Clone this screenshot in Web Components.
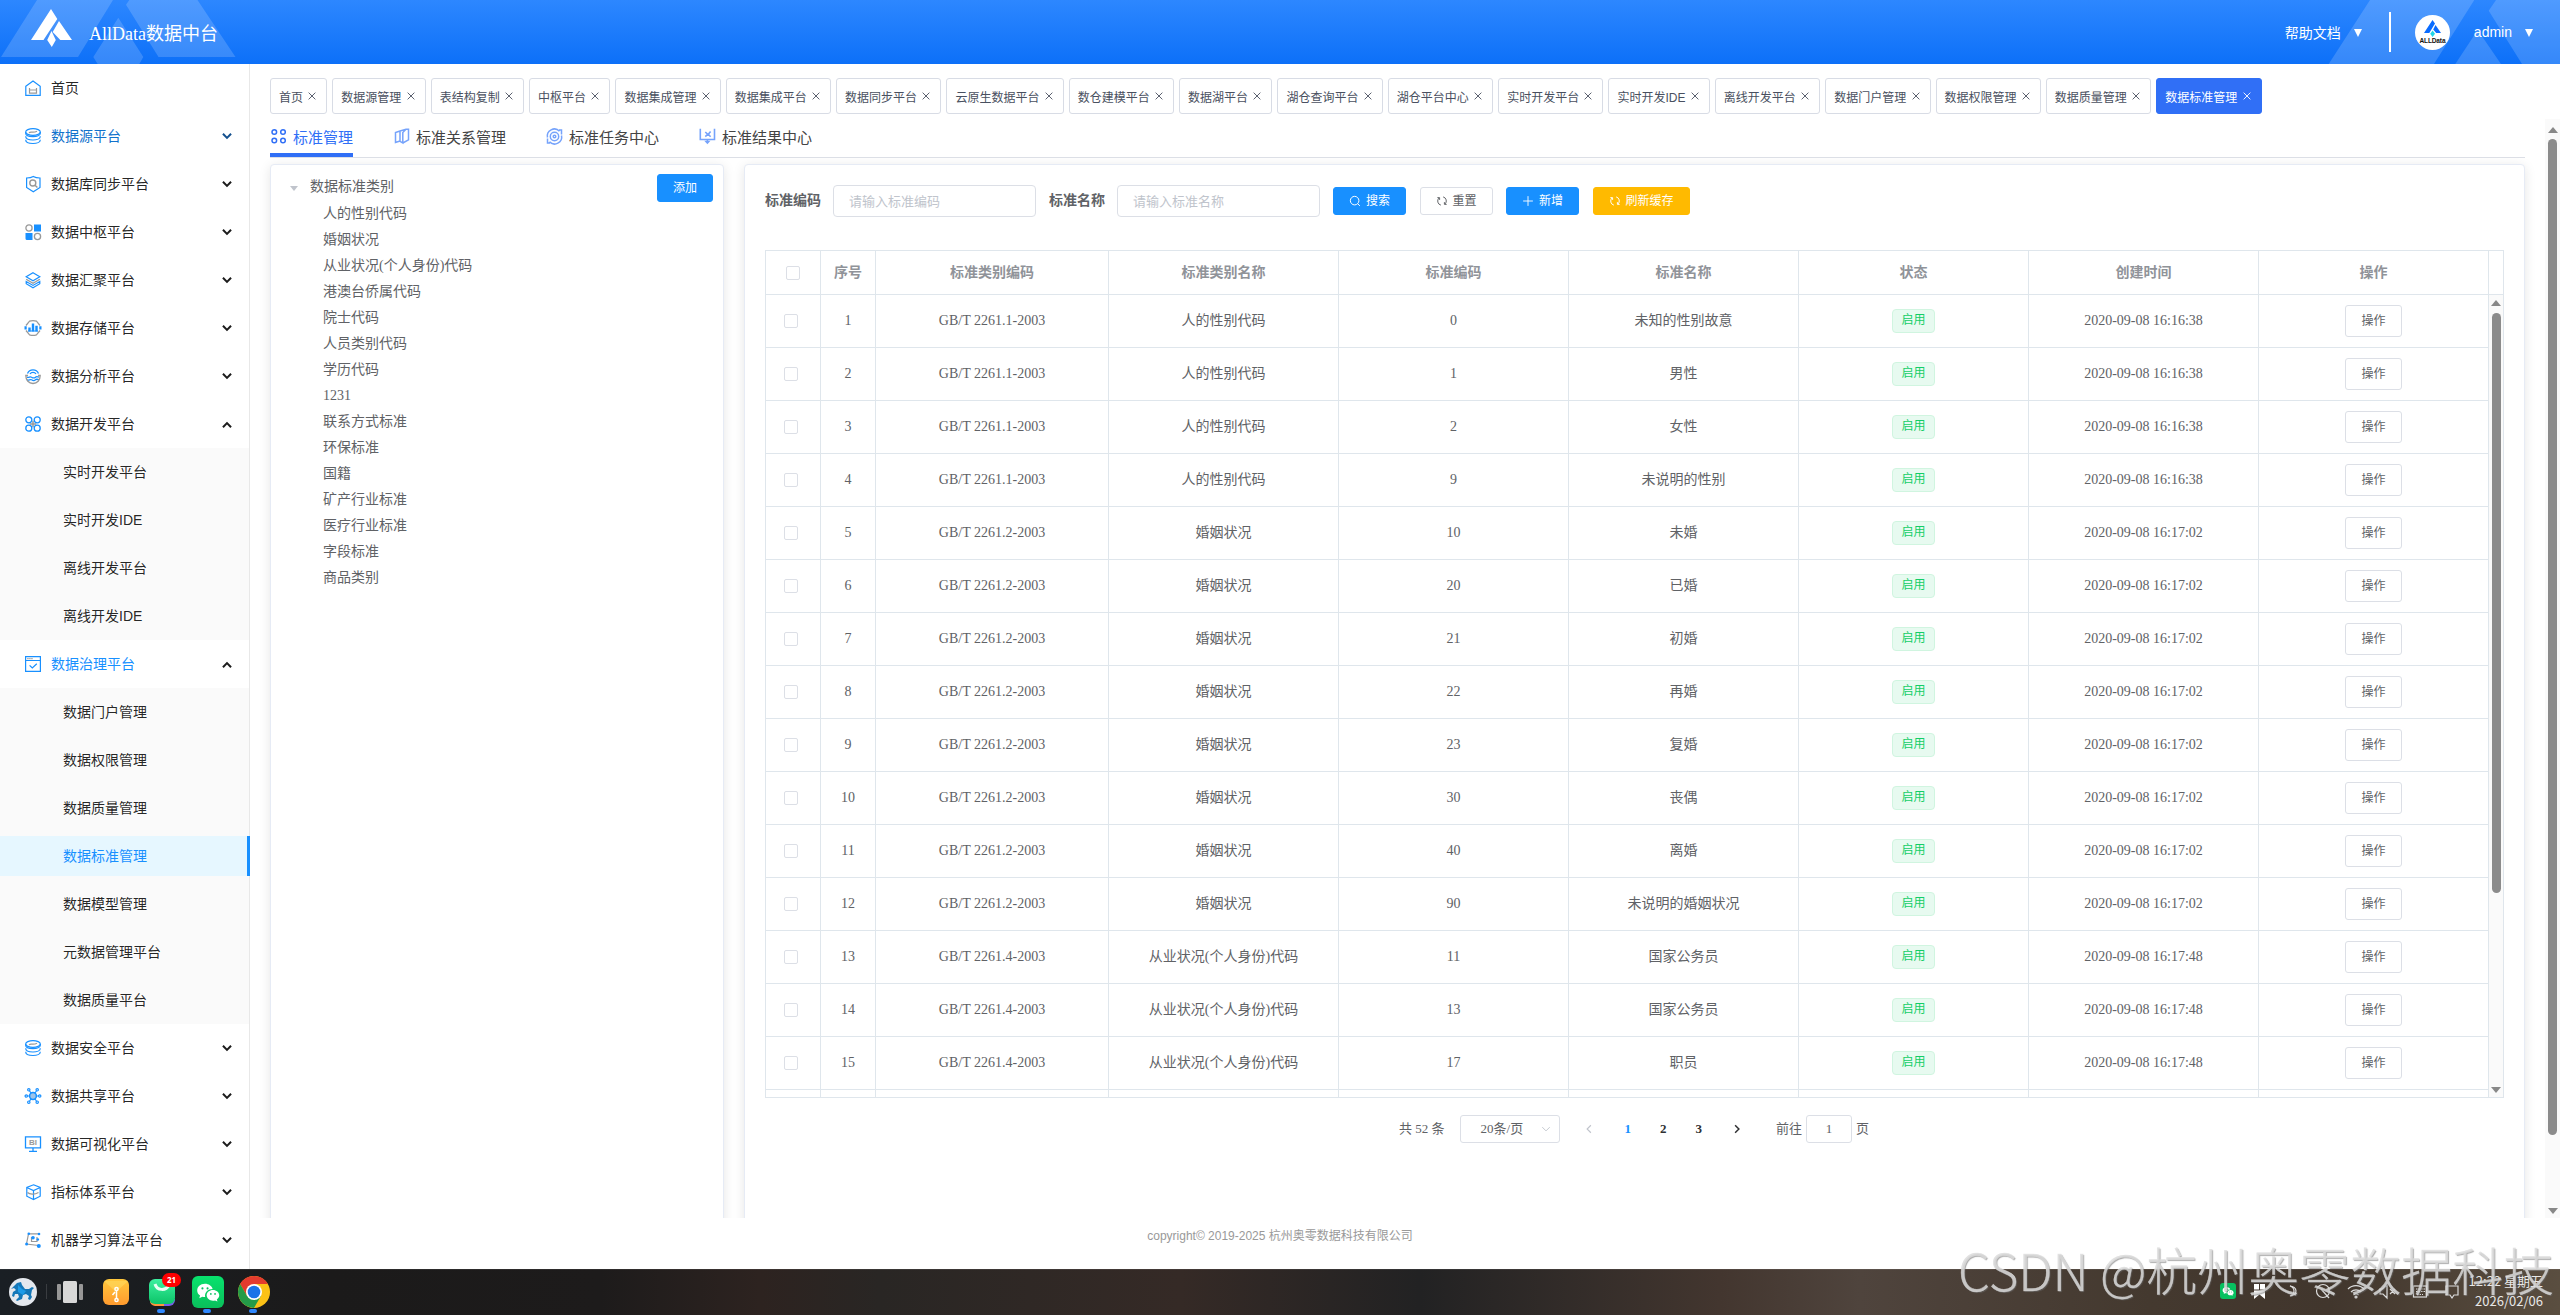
<!DOCTYPE html>
<html lang="zh-CN">

<head>
    <meta charset="utf-8" />
    <title>AllData数据中台</title>
    <style>
        html,
        body {
            margin: 0;
            padding: 0;
            height: 100%;
            overflow: hidden;
            background: #fff;
        }

        body {
            font-family: "Liberation Sans", "Noto Sans CJK SC", sans-serif;
            font-size: 14px;
        }
    </style>
</head>

<body>
    <all-data-app></all-data-app>
    <script>
        const BLUE = '#1890ff'
        const GRAY = '#999'

        // 图标库
        const ICONS = {
            home: `<g fill="none" stroke="${BLUE}"><path d="M.8 6.2 8 .9l7.200 5.300V15.300H.8z"/><path stroke="${GRAY}" d="M4.500 8v5.200h7V8M4.500 10h7"/></g>`,
            db: `<g fill="none" stroke="${BLUE}"><ellipse cx="8" cy="4" rx="7.300" ry="3.300"/><path d="M.7 4v1.300C.7 7.500 4 8.600 8 8.600s7.300-1.100 7.300-3.300V4M.7 8.200C.7 10.800 4 12 8 12s7.300-1.200 7.300-3.800M.7 11.700c0 2.600 3.300 3.800 7.300 3.800s7.300-1.200 7.300-3.800"/><path stroke="${GRAY}" d="M4 4.800c2-2 3.500.8 8-1.600"/></g>`,
            shield: `<g fill="none" stroke="${BLUE}"><path d="M8.300.5c2 1.200 4.300 1.500 6.700 1.500v9.500l-6.700 4.300-6.700-4.300V2C4 2 6.300 1.700 8.300.5z"/><g stroke="${GRAY}" stroke-width="1.400"><circle cx="7.800" cy="7" r="3"/><path d="m10 9.200 2.400 2.300"/></g></g>`,
            grid: `<g><path fill="${BLUE}" d="M9 .5h7v7H9zM.5 9h7v7H2a1.500 1.500 0 0 1-1.500-1.500z"/><g fill="none" stroke="${GRAY}" stroke-width="1.300"><circle cx="4" cy="4" r="3.100"/><circle cx="12.500" cy="12.500" r="3.100"/></g></g>`,
            layers: `<g fill="none" stroke="${BLUE}"><path d="m8 .8 6.800 4L8 8.800l-6.800-4z"/><path stroke="${GRAY}" stroke-width="1.300" d="m1.200 7.200 6.800 4 6.800-4"/><path d="M1.200 9.500v2.200l6.800 4 6.800-4V9.500L8 13.400z"/></g>`,
            storage: `<g fill="none" stroke="${GRAY}" stroke-width="1.300"><path d="M1 5.500 4.500 1.200A10 10 0 0 1 11.500 1.200L15 5.500M1 10.500l3.500 4.300a10 10 0 0 0 7 0l3.500-4.300"/><path stroke="${BLUE}" stroke-width="2.400" d="M4.500 11.500v-4M8 11.500V3.500M11.500 11.500V5.800"/></g><path fill="${BLUE}" d="M-.5 6.300h2.200v3.200H-.5zM14.300 6.300h2.200v3.200h-2.200zM3 10.500h10v1H3z"/>`,
            analysis: `<g fill="none" stroke="${BLUE}" stroke-width="1.300"><path d="M2.500 5.500a6 6 0 0 1 11 0M5 6a3.500 3.500 0 0 1 6 0M2 9.200c2 1 2.800-1 4.500 0s3 1 4 0 2-.7 3.500 0M2 11.800c2 1 2.800-1 4.500 0s3 1 4 0 2-.7 3.500 0"/><path stroke="${GRAY}" d="M3 7.500H.8c0 4.700 3 8 7.200 8s7.200-3.300 7.200-8H13"/></g>`,
            dev: `<path stroke="${GRAY}" stroke-width="1.500" d="M8 4.800v6.400M4.800 8h6.400"/><g fill="none" stroke="${BLUE}" stroke-width="1.300"><circle cx="3.800" cy="3.800" r="3"/><circle cx="12.200" cy="3.800" r="3"/><circle cx="3.800" cy="12.200" r="3"/><circle cx="12.200" cy="12.200" r="3"/></g>`,
            govern: `<g fill="none" stroke="${BLUE}" stroke-width="1.200"><path d="M.6.600h14.800v14.800H.6zM.6 4.500h14.800M4.600 9.300 7.300 12l4.500-4.300"/><path stroke="${GRAY}" d="M2.300 2.600h5.400" stroke-dasharray="1.300 .7"/></g>`,
            share: `<g fill="none" stroke="${BLUE}" stroke-width="1.200"><circle cx="8" cy="8" r="3.400" fill="#9fc4e8" stroke-width="1.500"/><circle cx="3.800" cy="1.800" r="1.200"/><circle cx="12.200" cy="1.800" r="1.200"/><circle cx="1.300" cy="8" r="1.200"/><circle cx="14.700" cy="8" r="1.200"/><circle cx="3.800" cy="14.200" r="1.200"/><circle cx="12.200" cy="14.200" r="1.200"/><path d="m4.500 3 1.700 2.200M11.500 3 9.800 5.200M2.500 8h2M11.500 8h2M4.500 13l1.700-2.200M11.500 13l-1.700-2.200"/></g>`,
            bi: `<g fill="none" stroke="${BLUE}" stroke-width="1.300"><path d="M.5.800h15v11H.5zM8 12v3M4 15.300h8"/></g><text x="8" y="9.200" text-anchor="middle" fill="${GRAY}" font-size="8" font-weight="bold" font-family="Liberation Sans, sans-serif">BI</text>`,
            cube: `<g fill="none" stroke="${BLUE}"><path d="m8.500.8 6.700 2.700v8.700l-6.700 3.300-6.700-3.300V3.500zM1.800 3.500l6.700 3 6.700-3M8.500 6.500v9"/><path stroke="${GRAY}" stroke-width="1.300" d="M2.500 8.500c2 2 7 2.500 11 0"/></g>`,
            ml: `<g fill="none" stroke="${GRAY}" stroke-width="1.200"><path d="M3.500 1.800h10.700M3.500 1.800 1.500 12l12 1.500M6.500 5v4.500h5.500V5"/></g><g fill="${BLUE}"><circle cx="3.800" cy="1.800" r="1.300"/><circle cx="14" cy="2" r="1.300"/><circle cx="1.600" cy="12" r="1.500"/><circle cx="13.800" cy="14" r="2"/><circle cx="8" cy="5.800" r="1.800"/><circle cx="12.800" cy="7.500" r="1.300"/></g>`,
            // 页签图标
            apps: `<g fill="none" stroke="currentColor" stroke-width="1.500"><circle cx="4.300" cy="4" r="2.300"/><circle cx="13" cy="4" r="2.300"/><circle cx="4.300" cy="12.500" r="2.300"/><circle cx="13" cy="12.500" r="2.300"/></g>`,
            book: `<path fill="none" stroke="currentColor" stroke-width="1.500" d="M7 3 2.500 4.500v10L7 13M7 3v10.300l2.800 1.700V4.500L13 1.300M7 3l6-1.700h2.500v10.500L9.800 15"/>`,
            target: `<g fill="none" stroke="currentColor" stroke-width="1.500"><circle cx="8.500" cy="8.500" r="1.300"/><circle cx="8.500" cy="8.500" r="4.200"/><path d="M1.500 9.500A7 7 0 0 1 13.500 3.300M15.500 7.500A7 7 0 0 1 3.500 13.700M1.500 10.500V15H4M15.500 6.500V2H13"/></g>`,
            result: `<g fill="none" stroke="currentColor" stroke-width="1.600"><path d="M1.300.800v10.700h14.200V.8M6.300 4l2.300 2.300-2.300 2.300M11.600 3.500 9.300 6.300l2.300 2.500M8.400 11.500V15"/></g><path fill="currentColor" d="M5.300 12.800h6.200l-3.100 3.500z"/>`,
            // 按钮图标
            close: `<path fill="none" stroke="currentColor" stroke-width="1.200" d="m3.500 3.500 9 9m0-9-9 9"/>`,
            search: `<g fill="none" stroke="currentColor" stroke-width="1.300"><circle cx="7.500" cy="7.500" r="5.700"/><path d="m11.500 11.500 3 3"/></g>`,
            refresh: `<path fill="none" stroke="currentColor" stroke-width="1.300" d="M6.500 13.500A5.600 5.600 0 0 1 4 4M1.800 3.500h3v3M9.500 2.500A5.600 5.600 0 0 1 12 12M14.200 12.500h-3v-3"/>`,
            plus: `<path fill="none" stroke="currentColor" stroke-width="1.200" d="M8 1.500v13M1.500 8h13"/>`,
            down: `<path fill="none" stroke="currentColor" stroke-width="1.200" d="m3 5.500 5 5 5-5"/>`,
            left: `<path fill="none" stroke="currentColor" stroke-width="1.500" d="M10.500 3 5.500 8l5 5"/>`,
            right: `<path fill="none" stroke="currentColor" stroke-width="2" d="m5.500 3 5 5-5 5"/>`,
            arrow: `<path fill="none" stroke="currentColor" stroke-width="3.200" d="m1.500 4.500 6.500 6.500 6.500-6.500"/>`,
            wechat: `<path fill="#fff" d="M6 2.500C2.800 2.500.8 4.500.8 7c0 1.400.7 2.600 1.900 3.400l-.5 1.700 2-1c.6.100 1.200.2 1.900.2-.5-3 1.800-5.300 5-5.300C10.500 3.900 8.500 2.500 6 2.500z"/><path fill="#fff" d="M15.500 10.200c0-2-1.900-3.600-4.200-3.600s-4.200 1.600-4.200 3.600 1.900 3.600 4.200 3.600c.5 0 1-.1 1.400-.2l1.600.8-.4-1.400c1-.7 1.600-1.700 1.600-2.800z"/><g fill="#07c160"><circle cx="4.300" cy="5.600" r=".7"/><circle cx="7.700" cy="5.600" r=".7"/><circle cx="9.900" cy="9.300" r=".6"/><circle cx="12.700" cy="9.300" r=".6"/></g>`
        }

        // 左侧菜单
        const MENU = [
            { icon: 'home', name: '首页', leaf: true },
            { icon: 'db', name: '数据源平台', hover: true },
            { icon: 'shield', name: '数据库同步平台' },
            { icon: 'grid', name: '数据中枢平台' },
            { icon: 'layers', name: '数据汇聚平台' },
            { icon: 'storage', name: '数据存储平台' },
            { icon: 'analysis', name: '数据分析平台' },
            { icon: 'dev', name: '数据开发平台', children: ['实时开发平台', '实时开发IDE', '离线开发平台', '离线开发IDE'] },
            { icon: 'govern', name: '数据治理平台', active: true, children: ['数据门户管理', '数据权限管理', '数据质量管理', '数据标准管理', '数据模型管理', '元数据管理平台', '数据质量平台'] },
            { icon: 'db', name: '数据安全平台' },
            { icon: 'share', name: '数据共享平台' },
            { icon: 'bi', name: '数据可视化平台' },
            { icon: 'cube', name: '指标体系平台' },
            { icon: 'ml', name: '机器学习算法平台' }
        ]
        const CURRENT = '数据标准管理'

        const TAGS = ['首页', '数据源管理', '表结构复制', '中枢平台', '数据集成管理', '数据集成平台', '数据同步平台', '云原生数据平台', '数仓建模平台', '数据湖平台', '湖仓查询平台', '湖仓平台中心', '实时开发平台', '实时开发IDE', '离线开发平台', '数据门户管理', '数据权限管理', '数据质量管理', '数据标准管理']

        const TABS = [['apps', '标准管理'], ['book', '标准关系管理'], ['target', '标准任务中心'], ['result', '标准结果中心']]

        const TREE = ['人的性别代码', '婚姻状况', '从业状况(个人身份)代码', '港澳台侨属代码', '院士代码', '人员类别代码', '学历代码', '1231', '联系方式标准', '环保标准', '国籍', '矿产行业标准', '医疗行业标准', '字段标准', '商品类别']

        const HEADS = ['序号', '标准类别编码', '标准类别名称', '标准编码', '标准名称', '状态', '创建时间', '操作']
        const SEX = ['GB/T 2261.1-2003', '人的性别代码', '2020-09-08 16:16:38']
        const MARRY = ['GB/T 2261.2-2003', '婚姻状况', '2020-09-08 16:17:02']
        const JOB = ['GB/T 2261.4-2003', '从业状况(个人身份)代码', '2020-09-08 16:17:48']
        const ROWS = [
            [SEX, '0', '未知的性别故意'],
            [SEX, '1', '男性'],
            [SEX, '2', '女性'],
            [SEX, '9', '未说明的性别'],
            [MARRY, '10', '未婚'],
            [MARRY, '20', '已婚'],
            [MARRY, '21', '初婚'],
            [MARRY, '22', '再婚'],
            [MARRY, '23', '复婚'],
            [MARRY, '30', '丧偶'],
            [MARRY, '40', '离婚'],
            [MARRY, '90', '未说明的婚姻状况'],
            [JOB, '11', '国家公务员'],
            [JOB, '13', '国家公务员'],
            [JOB, '17', '职员']
        ]

        // 基类：把样式和模板写入 shadow root
        class BaseElement extends HTMLElement {
            constructor() {
                super()
                this.attachShadow({ mode: 'open' })
            }
            connectedCallback() {
                this.shadowRoot.innerHTML = `<style>*{box-sizing:border-box}${this.css()}</style>${this.html()}`
            }
            css() { return '' }
            html() { return '<slot></slot>' }
        }

        class UiIcon extends BaseElement {
            css() {
                return `
                :host{display:inline-block;width:16px;height:16px;flex:none}
                svg{display:block;width:100%;height:100%;overflow:visible;stroke-width:1.200}
                text{stroke:none}
                `
            }
            html() {
                return `<svg viewBox="0 0 16 16">${ICONS[this.getAttribute('name')]}</svg>`
            }
        }
        customElements.define('ui-icon', UiIcon)

        class UiButton extends BaseElement {
            css() {
                return `
                :host{display:inline-flex;flex:none}
                button{display:flex;align-items:center;justify-content:center;gap:5px;height:28px;padding:0 15px 1px;border:1px solid #dcdfe6;border-radius:3px;
                    background:#fff;color:#606266;font:12px/1 "Liberation Sans","Noto Sans CJK SC",sans-serif;white-space:nowrap}
                ui-icon{width:12px;height:12px}
                :host([type=primary]) button{background:#1890ff;border-color:#1890ff;color:#fff}
                :host([type=warning]) button{background:#ffba00;border-color:#ffba00;color:#fff}
                :host([size=small]) button{height:32px}
                `
            }
            html() {
                const icon = this.getAttribute('icon')
                return `<button>${icon ? `<ui-icon name="${icon}"></ui-icon>` : ''}<slot></slot></button>`
            }
        }
        customElements.define('ui-button', UiButton)

        // 滚动条，滑块长度由 --thumb 指定
        class UiScrollbar extends BaseElement {
            css() {
                return `
                :host{display:flex;flex-direction:column;align-items:center;width:15px;padding:5px 0 4px;background:#fafafa;flex:none}
                i{border:5px solid transparent;border-top:0;border-bottom:6px solid #888}
                i.down{border-top:6px solid #888;border-bottom:0;margin-top:auto}
                b{width:9px;height:var(--thumb);margin-top:var(--gap,6px);border-radius:5px;background:#8b8b8b}
                `
            }
            html() { return `<i></i><b></b><i class="down"></i>` }
        }
        customElements.define('ui-scrollbar', UiScrollbar)

        class AppHeader extends BaseElement {
            css() {
                return `
                :host{display:flex;align-items:center;position:relative;height:64px;flex:none;overflow:hidden;color:#fff;background:linear-gradient(#2d87ff,#0d70f8)}
                .deco{position:absolute;top:0;height:64px;fill:#fff;fill-opacity:.17}
                .deco.l{left:0}
                .deco.r{right:0}
                .logo{width:42px;height:38px;margin:-8px 0 0 31px;fill:#fff;z-index:1}
                h1{margin:3px 0 0 16px;font:18px/26px "Liberation Serif","Noto Sans CJK SC",serif;z-index:1}
                .right{display:flex;align-items:center;margin-left:auto;z-index:1}
                .tri{border:4px solid transparent;border-top:8px solid #fff;border-bottom:0;margin-top:2px}
                .line{width:2px;height:40px;margin:0 24px 0 27px;background:#fff}
                .avatar{width:35px;height:35px;margin-right:24px}
                .avatar text{font:bold 6.500px "Liberation Sans",sans-serif}
                `
            }
            html() {
                return `
                <svg class="deco l" width="240" viewBox="0 0 240 64"><path d="M37 0h76L78 57H1zM118.300 17.700 143.300 57l-4 7H97.700l-4.400-7zM129.300 0 126 4.700 158.500 57h77L197.500 0z"/></svg>
                <svg class="deco r" width="240" viewBox="0 0 240 64"><path d="M50 0h104.300L114 64H8.700zM157.700 30l23.300 34h-45.700zM176 0l-7.300 10.700L202 64h38V0z"/></svg>
                <svg class="logo" viewBox="0 0 42 38"><path d="M20 0 0 31h12.500L26.300 10zM28 12 41 31H29.300l-7.600-8zM20.500 22l4.300 9-4 7-4.600-7z"/></svg>
                <h1>AllData数据中台</h1>
                <div class="right">
                    <span>帮助文档</span><i class="tri" style="margin-left:13px"></i>
                    <i class="line"></i>
                    <svg class="avatar" viewBox="0 0 35 35">
                        <circle cx="17.500" cy="17.500" r="17.500" fill="#fff"/>
                        <path fill="#0a6cff" d="M17.500 5 9 18h5.300l5.700-9.500zM20.500 10l5.500 8h-4.800l-3-3.500z"/>
                        <path fill="#1fd6e8" d="m17.600 15.500 2.400 3.300-2.400 3.200-2.400-3.200z"/>
                        <text x="17.500" y="28.300" text-anchor="middle" textLength="26" fill="#111">ALLData</text>
                    </svg>
                    <span>admin</span><i class="tri" style="margin:2px 27px 0 13px"></i>
                </div>`
            }
        }
        customElements.define('app-header', AppHeader)

        class MenuItem extends BaseElement {
            css() {
                return `
                :host{display:flex;align-items:center;height:48px;padding:0 16px 0 25px;color:rgba(0,0,0,.87);line-height:20px}
                .arrow{width:10px;height:10px;margin:-1px 1px 0 auto;color:#1c1c1c}
                .arrow.up{transform:rotate(180deg);margin-top:2px}
                span{margin-left:10px}
                :host([hover]){color:#1272cc}
                :host([hover]) .arrow{color:#14508e}
                :host([active]){color:#1890ff}
                `
            }
            html() {
                const arrow = this.hasAttribute('leaf') ? '' : `<ui-icon class="arrow${this.hasAttribute('open') ? ' up' : ''}" name="arrow"></ui-icon>`
                return `<ui-icon name="${this.getAttribute('icon')}"></ui-icon><span><slot></slot></span>${arrow}`
            }
        }
        customElements.define('menu-item', MenuItem)

        class SubMenu extends BaseElement {
            css() {
                return `
                :host{display:flow-root;background:#fafafa;color:rgba(0,0,0,.87)}
                div{height:40px;margin:4px 0 8px;padding-left:63px;line-height:40px}
                div:last-child{margin-bottom:4px}
                .on{color:#1890ff;background:#e6f7ff;border-right:3px solid #1890ff;margin-right:-1px}
                `
            }
            html() {
                return this.getAttribute('items').split(',').map(d => `<div class="${d === CURRENT ? 'on' : ''}">${d}</div>`).join('')
            }
        }
        customElements.define('sub-menu', SubMenu)

        class SideMenu extends BaseElement {
            css() {
                return `
                :host{display:block;width:250px;flex:none;border-right:1px solid #e8e8e8}
                `
            }
            html() {
                return MENU.map(d => {
                    const attrs = ['leaf', 'hover', 'active'].filter(k => d[k]).join(' ')
                    const item = `<menu-item icon="${d.icon}" ${attrs} ${d.children ? 'open' : ''}>${d.name}</menu-item>`
                    return item + (d.children ? `<sub-menu items="${d.children}"></sub-menu>` : '')
                }).join('')
            }
        }
        customElements.define('side-menu', SideMenu)

        class TagBar extends BaseElement {
            css() {
                return `
                :host{display:flex;gap:5px;padding:14px 0 0 20px;flex:none}
                div{display:flex;align-items:center;height:36px;padding:0 8px;border:1px solid #d8dce5;border-radius:3px;color:#495060;font-size:12px;white-space:nowrap}
                ui-icon{width:12px;height:12px;margin:-1px 0 0 3.330px}
                .on{color:#fff;background:#306ff6;border-color:#306ff6}
                `
            }
            html() {
                return TAGS.map(d => `<div class="${d === CURRENT ? 'on' : ''}">${d}<ui-icon name="close"></ui-icon></div>`).join('')
            }
        }
        customElements.define('tag-bar', TagBar)

        class PageTabs extends BaseElement {
            css() {
                return `
                :host{display:flex;gap:40px;height:39px;border-bottom:1px solid #dcdfe6;font-size:15px;color:#444;flex:none}
                div{display:flex;align-items:center;gap:7px;height:38px;border-bottom:4px solid transparent}
                ui-icon{color:#76a3fb}
                .on{color:#306ff6;border-color:#306ff6}
                .on ui-icon{color:#306ff6}
                `
            }
            html() {
                return TABS.map((d, i) => `<div class="${i ? '' : 'on'}"><ui-icon name="${d[0]}"></ui-icon>${d[1]}</div>`).join('')
            }
        }
        customElements.define('page-tabs', PageTabs)

        class UiCard extends BaseElement {
            css() {
                return `
                :host{display:block;box-sizing:border-box;height:1100px;border:1px solid #e6ebf5;border-radius:4px;background:#fff;box-shadow:0 2px 12px rgba(0,0,0,.1)}
                `
            }
        }
        customElements.define('ui-card', UiCard)

        class CategoryTree extends BaseElement {
            css() {
                return `
                :host{display:flex;align-items:flex-start;justify-content:space-between;padding:9px 10px 0 19px}
                ul{list-style:none;margin:0;padding:0;font:14px/26px "Liberation Serif","Noto Sans CJK SC",serif;color:#606266}
                li{height:26px;padding-left:33px}
                li.root{display:flex;align-items:center;padding:0;margin-bottom:1px}
                i{border:4px solid transparent;border-top:5px solid #c0c4cc;border-bottom:0;margin:2px 12px 0 0}
                `
            }
            html() {
                return `<ul><li class="root"><i></i>数据标准类别</li>${TREE.map(d => `<li>${d}</li>`).join('')}</ul><ui-button type="primary">添加</ui-button>`
            }
        }
        customElements.define('category-tree', CategoryTree)

        class FilterForm extends BaseElement {
            css() {
                return `
                :host{display:flex;align-items:center;height:32px}
                label{font:bold 14px/32px "Liberation Serif","Noto Sans CJK SC",serif;color:#606266;margin-right:12px}
                input{width:203px;height:32px;margin:0 13px 0 0;padding:0 15px;border:1px solid #dcdfe6;border-radius:4px;font:13px "Liberation Sans","Noto Sans CJK SC",sans-serif}
                input::placeholder{color:#c0c4cc}
                ui-button{margin-right:13.500px}
                `
            }
            html() {
                return `
                <label>标准编码</label><input placeholder="请输入标准编码" />
                <label>标准名称</label><input placeholder="请输入标准名称" />
                <ui-button type="primary" icon="search">搜索</ui-button>
                <ui-button icon="refresh">重置</ui-button>
                <ui-button type="primary" icon="plus">新增</ui-button>
                <ui-button type="warning" icon="refresh">刷新缓存</ui-button>`
            }
        }
        customElements.define('filter-form', FilterForm)

        class StandardTable extends BaseElement {
            css() {
                return `
                :host{display:block;width:1739px;height:848px;border:1px solid #dfe6ec;color:#606266;font:14px/20px "Liberation Serif","Noto Sans CJK SC",serif}
                .row{display:grid;grid-template-columns:55px 55px 233px repeat(6,230px)}
                .row>div{display:flex;align-items:center;justify-content:center;height:53px;border-right:1px solid #dfe6ec;border-bottom:1px solid #dfe6ec}
                .head{border-bottom:1px solid #dfe6ec}
                .head>div{height:43px;border-bottom:0;font-weight:bold;color:#909399}
                .body{display:flex;height:802px;overflow:hidden}
                .check{width:14px;height:14px;border:1px solid #dcdfe6;border-radius:2px;margin-right:4px}
                .head .check{margin-right:0}
                .tag{height:24px;padding:0 8px;border:1px solid #d0f5e0;border-radius:4px;background:#e7faf0;color:#13ce66;font:12px/21px "Liberation Sans","Noto Sans CJK SC",sans-serif}
                ui-scrollbar{--thumb:580px;--gap:7px;width:14px;height:802px}
                `
            }
            row(d, i) {
                const [[code, type, time], no, name] = d
                return `<div class="row">
                    <div><i class="check"></i></div><div>${i + 1}</div><div>${code}</div><div>${type}</div><div>${no}</div><div>${name}</div>
                    <div><span class="tag">启用</span></div><div>${time}</div><div><ui-button size="small">操作</ui-button></div>
                </div>`
            }
            html() {
                return `
                <div class="row head"><div><i class="check"></i></div>${HEADS.map(d => `<div>${d}</div>`).join('')}</div>
                <div class="body">
                    <div>${ROWS.map(this.row).join('')}<div class="row">${'<div></div>'.repeat(9)}</div></div>
                    <ui-scrollbar></ui-scrollbar>
                </div>`
            }
        }
        customElements.define('standard-table', StandardTable)

        class UiPagination extends BaseElement {
            css() {
                return `
                :host{display:flex;align-items:center;height:28px;font:13px/28px "Liberation Serif","Noto Sans CJK SC",serif;color:#606266}
                .select{display:flex;align-items:center;justify-content:space-between;width:100px;height:28px;margin:0 12px 0 15px;padding:0 7px 0 20px;border:1px solid #dcdfe6;border-radius:3px}
                .select ui-icon{width:12px;height:12px;color:#c0c4cc}
                .cell{display:flex;align-items:center;justify-content:center;width:35.500px;font-weight:bold;color:#303133}
                .cell ui-icon{width:12px;height:12px}
                .on{color:#1890ff}
                .off{color:#c0c4cc}
                .jump{width:46px;height:28px;line-height:26px;margin:0 4px;border:1px solid #dcdfe6;border-radius:3px;text-align:center}
                `
            }
            html() {
                return `
                <span>共 52 条</span>
                <div class="select">20条/页<ui-icon name="down"></ui-icon></div>
                <div class="cell off"><ui-icon name="left"></ui-icon></div>
                <div class="cell on" style="margin-left:3px">1</div><div class="cell">2</div><div class="cell">3</div>
                <div class="cell" style="margin:0 21px 0 3px"><ui-icon name="right"></ui-icon></div>
                <span>前往</span><div class="jump">1</div><span>页</span>`
            }
        }
        customElements.define('ui-pagination', UiPagination)

        class StandardPage extends BaseElement {
            css() {
                return `
                :host{display:flex;min-height:0;flex:1}
                .page{flex:1;display:flex;flex-direction:column;padding:5px 20px 0}
                .cards{display:grid;grid-template-columns:454px 1fr;gap:20px;flex:1;min-height:0;overflow:hidden;padding:6px 20px 0;margin:0 -20px}
                filter-form{margin:20px 0 33px 20px}
                standard-table{margin-left:20px}
                ui-pagination{margin:17px 0 0 654px}
                ui-scrollbar{--thumb:996px;--gap:6px;box-sizing:border-box;margin-top:5px;padding-top:8px}
                `
            }
            html() {
                return `
                <div class="page">
                    <page-tabs></page-tabs>
                    <div class="cards">
                        <ui-card><category-tree></category-tree></ui-card>
                        <ui-card>
                            <filter-form></filter-form>
                            <standard-table></standard-table>
                            <ui-pagination></ui-pagination>
                        </ui-card>
                    </div>
                </div>
                <ui-scrollbar></ui-scrollbar>`
            }
        }
        customElements.define('standard-page', StandardPage)

        class AppFooter extends BaseElement {
            css() {
                return `
                :host{display:block;height:51px;flex:none;padding-right:250px;line-height:36px;text-align:center;font-size:12px;color:#999}
                `
            }
        }
        customElements.define('app-footer', AppFooter)

        // 系统任务栏
        class TaskBar extends BaseElement {
            css() {
                return `
                :host{display:flex;justify-content:space-between;height:46px;flex:none;color:#e8e8e8;font:13px/20px "Noto Sans CJK SC",sans-serif;
                    background:linear-gradient(90deg,#1a1f24 0,#1b1a1a 330px,#1d1b1b 600px,#2d2320 760px,#292624 880px,#352a26 1180px,#222223 1420px,#43362f 1720px,#4f443d 1860px,#44392f 2150px,#41362d 2330px,#5a4e40 2560px);
                    border-top:1px solid rgba(255,255,255,.08)}
                svg{display:block;overflow:visible}
                .tray{display:flex;padding-right:17px}
                .clock{display:flex;flex-direction:column;align-items:flex-end;padding-top:1px;margin-left:10px;white-space:nowrap}
                text{font:bold 8px "Noto Sans",sans-serif}
                `
            }
            html() {
                return `
                <svg width="280" height="45" viewBox="0 1270 280 45">
                    <defs>
                        <linearGradient id="o" x2="0" y2="1"><stop stop-color="#ffc83d"/><stop offset="1" stop-color="#ff9a2e"/></linearGradient>
                        <linearGradient id="g" x2="0" y2="1"><stop stop-color="#3df0a0"/><stop offset="1" stop-color="#0cc468"/></linearGradient>
                        <linearGradient id="w" x2="0" y2="1"><stop stop-color="#08e26d"/><stop offset="1" stop-color="#0abf5b"/></linearGradient>
                    </defs>
                    <circle cx="23" cy="1292" r="14" fill="#e4e8ee"/>
                    <path fill="#1477b8" d="m14 1286 3-3 4-1 1 3 3 4 4 0 3-2 2 1-2 2-1 5 1 2-2 3-2-1 1-3-3-2-3 1-1 4-5 2-1-1 3-3-1-3-3 0-1 3-2-1 1-4 3-2-2-2-3 1z"/>
                    <path fill="#1d9be8" d="m18 1285 4 4 4 2-3 4-5-3z"/>
                    <path stroke="#3a3d41" d="M46.500 1284v15"/>
                    <rect x="63" y="1281" width="14" height="22" rx="1.500" fill="#d8d8d8"/><rect x="57" y="1284" width="4" height="16" rx="1" fill="#979797"/><rect x="79" y="1284" width="4" height="16" rx="1" fill="#979797"/>
                    <rect x="103" y="1279" width="26" height="26" rx="6" fill="url(#o)"/>
                    <path fill="#ffdc62" opacity=".55" d="M104 1281h24l-12 11z"/>
                    <g fill="none" stroke="#fff" stroke-width="1.500"><circle cx="116.500" cy="1289" r="1.600"/><circle cx="116.500" cy="1300" r="1.600"/><path d="M116.500 1290.500v8M115 1292l-2.500 3"/></g>
                    <path fill="#7560e8" d="M160 1299h15v1a6 6 0 0 1-6 6h-9z"/><path fill="#ff963c" d="M150 1300h14v6h-9a6 6 0 0 1-5-4z"/>
                    <rect x="149" y="1279" width="26" height="25" rx="6" fill="url(#g)"/>
                    <path fill="none" stroke="#e9fff4" stroke-width="3" d="M155 1284c2 7 11 7 14 1"/>
                    <rect x="162" y="1273" width="19" height="14" rx="7" fill="#f00"/><text x="171.500" y="1283" text-anchor="middle" fill="#fff">21</text>
                    <rect x="192" y="1276" width="32" height="32" rx="6" fill="url(#w)"/><svg x="196" y="1280" width="24" height="24" viewBox="0 0 16 16">${ICONS.wechat}</svg>
                    <circle cx="254" cy="1292" r="16" fill="#fbc116"/>
                    <path fill="#e33b2e" d="M254 1292h0l-6.900 4-6.950-12A16 16 0 0 1 267.900 1284H254z"/>
                    <path fill="#249b48" d="M240.150 1284a16 16 0 0 0 13.850 24l6.900-12-6.900-4-6.900 4z"/>
                    <circle cx="254" cy="1292" r="8" fill="#fff"/><circle cx="254" cy="1292" r="6.300" fill="#1a73e8"/>
                    <g fill="#2f88ff"><rect x="157" y="1309" width="8" height="4" rx="2"/><rect x="203" y="1309" width="8" height="4" rx="2"/><rect x="249" y="1309" width="8" height="4" rx="2"/></g>
                </svg>
                <div class="tray">
                    <svg width="240" height="45" viewBox="2221 1270 240 45">
                        <rect x="2222" y="1283" width="16" height="16" rx="3" fill="#07c160"/><svg x="2224" y="1285" width="12" height="12" viewBox="0 0 16 16">${ICONS.wechat}</svg>
                        <path fill="#fff" d="M2256 1284h5v5.500h-5zM2262 1284h5v5.500h-5zM2256 1290.500h11v8.500l-5.500-4.500-5.500 4.500z"/>
                        <g fill="none" stroke="#ddd" stroke-width="1.200">
                            <path d="M2292 1286c3 0 6 2 6 5s-3 5-6 5c3-1 4-3 4-5s-1-4-4-5z"/>
                            <circle cx="2325" cy="1291" r="6.500"/><path d="m2323 1289 8 9"/>
                            <path d="M2350 1289a11 11 0 0 1 16 0M2353 1292a7 7 0 0 1 10 0M2355.500 1295a4 4 0 0 1 5 0"/><circle cx="2358" cy="1297" r="1"/>
                            <path d="M2382 1289h3l4-4v13l-4-4h-3zM2392 1289l5 5m0-5-5 5"/>
                            <rect x="2415.500" y="1286" width="13" height="11"/><path d="M2418 1289h9M2418 1291.500h9M2419 1294.500h6" stroke-dasharray="1.500 1"/>
                            <path d="M2448 1286h12v9h-4l-2 3-2-3h-4z"/>
                        </g>
                    </svg>
                    <div class="clock"><span>12:22 星期五</span><span>2026/02/06</span></div>
                </div>`
            }
        }
        customElements.define('task-bar', TaskBar)

        class AllDataApp extends BaseElement {
            css() {
                return `
                :host{display:flex;flex-direction:column;position:relative;width:2560px;height:1315px;overflow:hidden}
                .main{display:flex;flex:1;min-height:0}
                .content{display:flex;flex-direction:column;flex:1;min-width:0}
                .mark{position:absolute;left:1958px;top:1232px;font:300 51px/74px "Noto Sans CJK SC",sans-serif;color:rgba(220,220,220,.84);
                    -webkit-text-stroke:.5px rgba(220,220,220,.6);text-shadow:1px 1px 1px rgba(110,110,110,.6);white-space:nowrap}
                `
            }
            html() {
                return `
                <app-header></app-header>
                <div class="main">
                    <side-menu></side-menu>
                    <div class="content">
                        <tag-bar></tag-bar>
                        <standard-page></standard-page>
                        <app-footer>copyright© 2019-2025 杭州奥零数据科技有限公司</app-footer>
                    </div>
                </div>
                <task-bar></task-bar>
                <div class="mark">CSDN @杭州奥零数据科技</div>`
            }
        }
        customElements.define('all-data-app', AllDataApp)
    </script>
</body>

</html>
